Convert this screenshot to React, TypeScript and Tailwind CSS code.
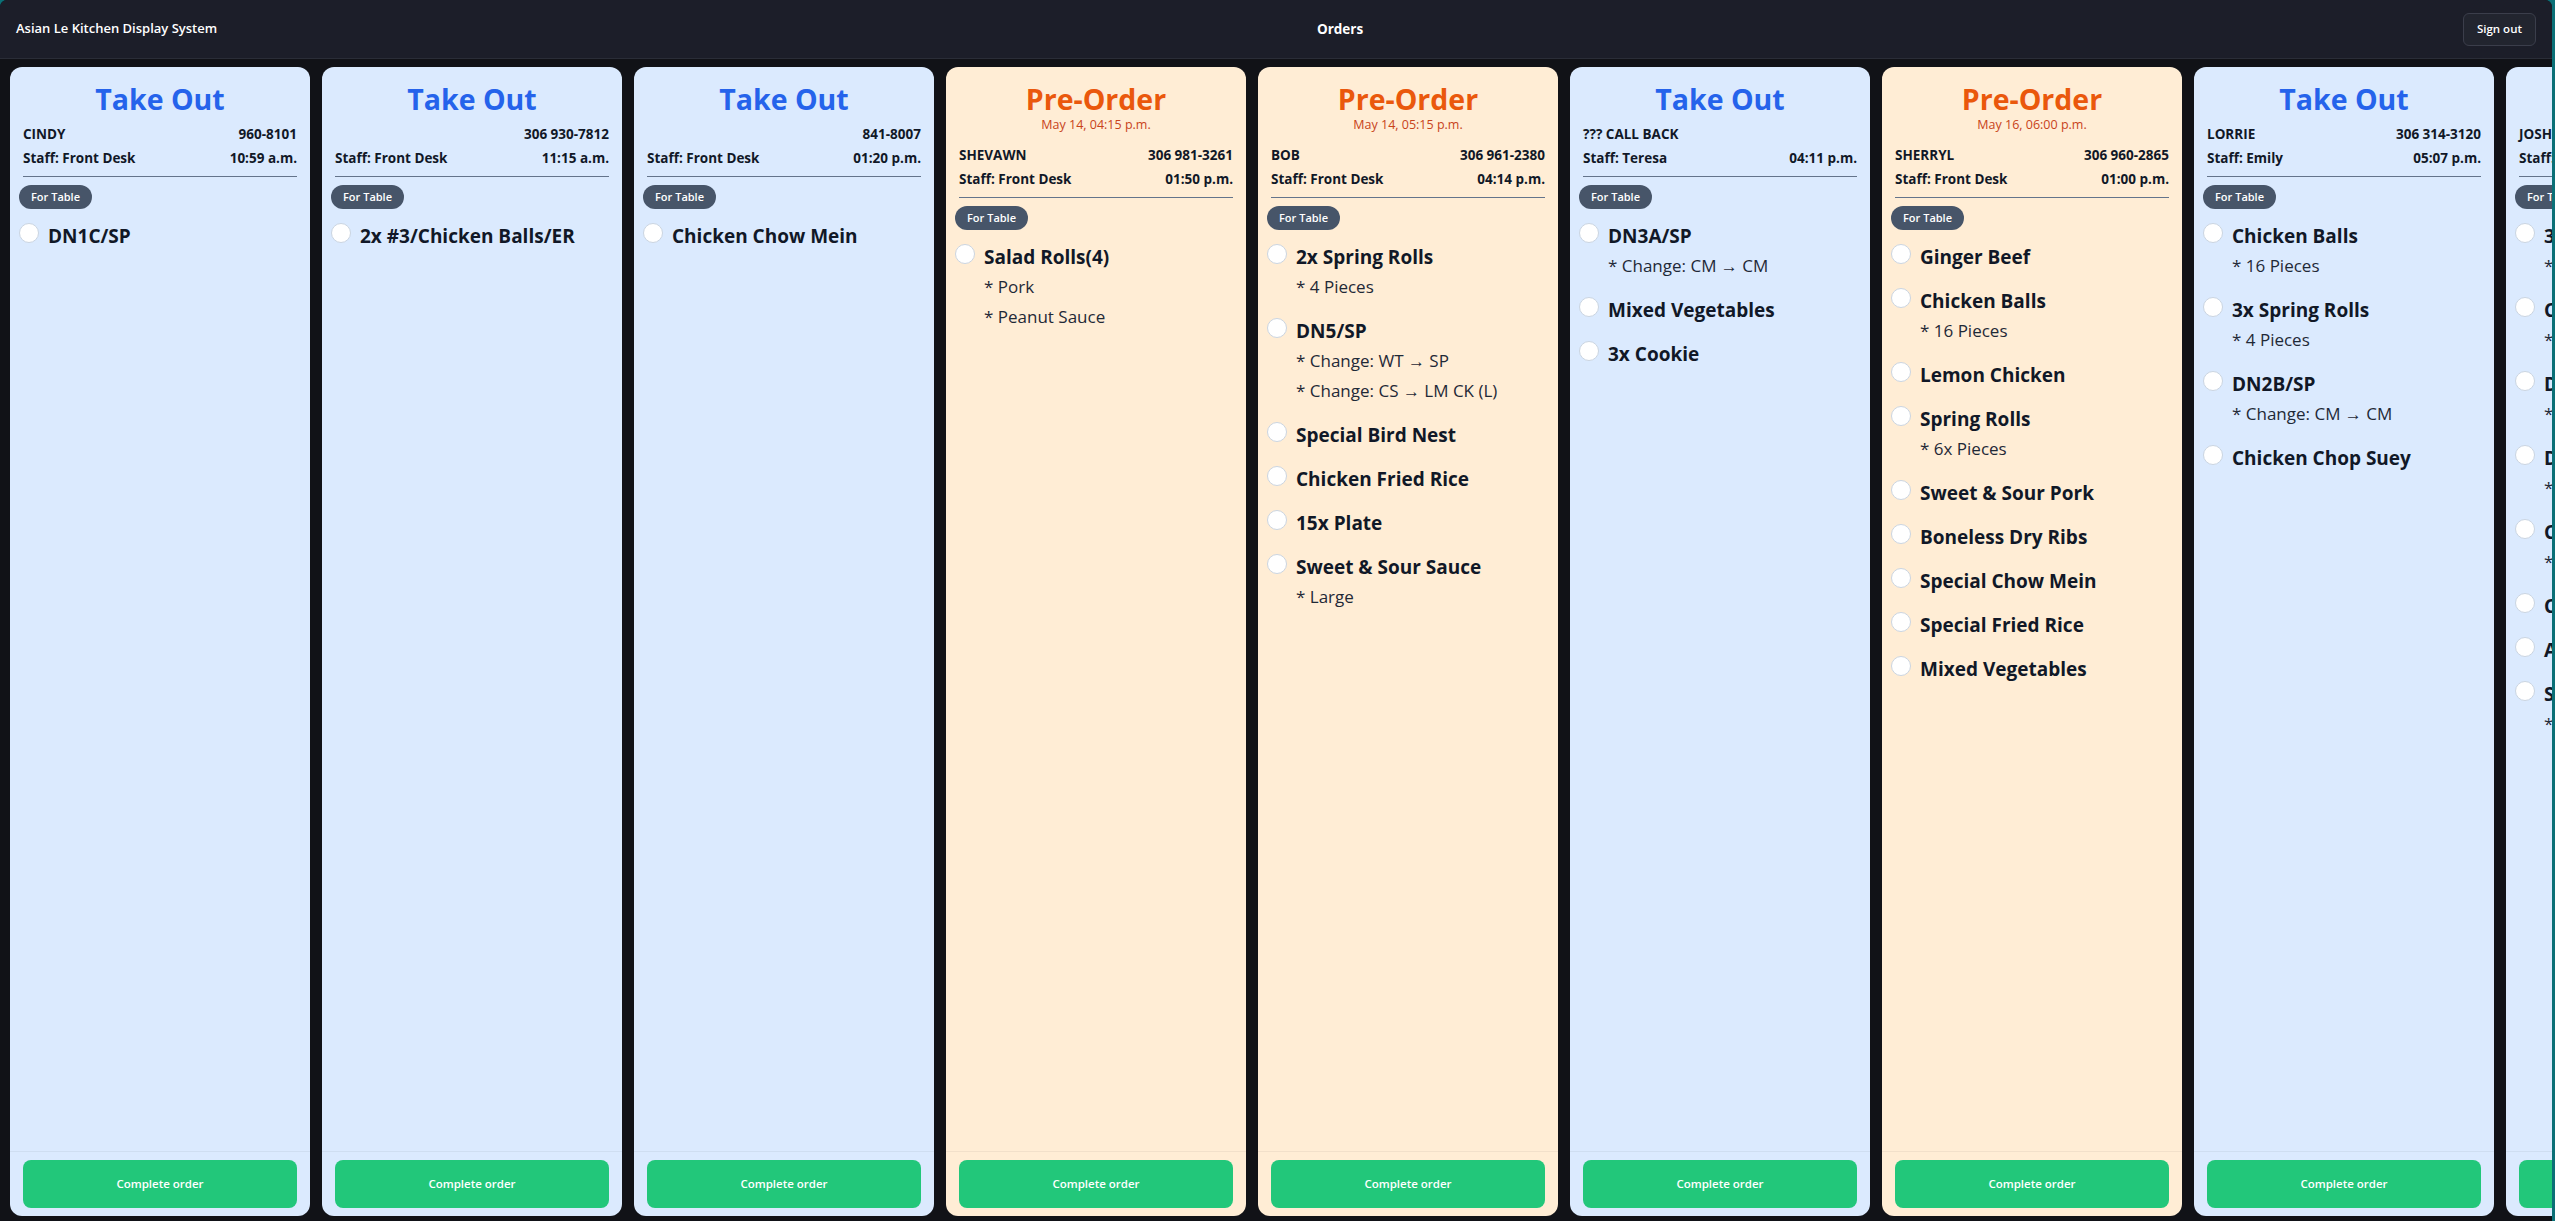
import clsx from "clsx";

type OrderItem = { name: string; notes?: string[] };

type Order = {
  id: number;
  kind: "takeout" | "preorder";
  due?: string;
  name?: string;
  phone?: string;
  staff: string;
  time: string;
  items: OrderItem[];
};

const orders: Order[] = [
  { id: 1, kind: "takeout", name: "CINDY", phone: "960-8101", staff: "Front Desk", time: "10:59 a.m.", items: [{ name: "DN1C/SP" }] },
  { id: 2, kind: "takeout", phone: "306 930-7812", staff: "Front Desk", time: "11:15 a.m.", items: [{ name: "2x #3/Chicken Balls/ER" }] },
  { id: 3, kind: "takeout", phone: "841-8007", staff: "Front Desk", time: "01:20 p.m.", items: [{ name: "Chicken Chow Mein" }] },
  {
    id: 4,
    kind: "preorder",
    due: "May 14, 04:15 p.m.",
    name: "SHEVAWN",
    phone: "306 981-3261",
    staff: "Front Desk",
    time: "01:50 p.m.",
    items: [{ name: "Salad Rolls(4)", notes: ["Pork", "Peanut Sauce"] }],
  },
  {
    id: 5,
    kind: "preorder",
    due: "May 14, 05:15 p.m.",
    name: "BOB",
    phone: "306 961-2380",
    staff: "Front Desk",
    time: "04:14 p.m.",
    items: [
      { name: "2x Spring Rolls", notes: ["4 Pieces"] },
      { name: "DN5/SP", notes: ["Change: WT → SP", "Change: CS → LM CK (L)"] },
      { name: "Special Bird Nest" },
      { name: "Chicken Fried Rice" },
      { name: "15x Plate" },
      { name: "Sweet & Sour Sauce", notes: ["Large"] },
    ],
  },
  {
    id: 6,
    kind: "takeout",
    name: "??? CALL BACK",
    staff: "Teresa",
    time: "04:11 p.m.",
    items: [{ name: "DN3A/SP", notes: ["Change: CM → CM"] }, { name: "Mixed Vegetables" }, { name: "3x Cookie" }],
  },
  {
    id: 7,
    kind: "preorder",
    due: "May 16, 06:00 p.m.",
    name: "SHERRYL",
    phone: "306 960-2865",
    staff: "Front Desk",
    time: "01:00 p.m.",
    items: [
      { name: "Ginger Beef" },
      { name: "Chicken Balls", notes: ["16 Pieces"] },
      { name: "Lemon Chicken" },
      { name: "Spring Rolls", notes: ["6x Pieces"] },
      { name: "Sweet & Sour Pork" },
      { name: "Boneless Dry Ribs" },
      { name: "Special Chow Mein" },
      { name: "Special Fried Rice" },
      { name: "Mixed Vegetables" },
    ],
  },
  {
    id: 8,
    kind: "takeout",
    name: "LORRIE",
    phone: "306 314-3120",
    staff: "Emily",
    time: "05:07 p.m.",
    items: [
      { name: "Chicken Balls", notes: ["16 Pieces"] },
      { name: "3x Spring Rolls", notes: ["4 Pieces"] },
      { name: "DN2B/SP", notes: ["Change: CM → CM"] },
      { name: "Chicken Chop Suey" },
    ],
  },
  {
    id: 9,
    kind: "takeout",
    name: "JOSH",
    phone: "306 715-4402",
    staff: "Front Desk",
    time: "05:12 p.m.",
    items: [
      { name: "3x Spring Rolls", notes: ["4 Pieces"] },
      { name: "Chicken Balls", notes: ["16 Pieces"] },
      { name: "DN1A/SP", notes: ["Change: CM → SP"] },
      { name: "DN4/SP", notes: ["Change: WT → CM"] },
      { name: "Chicken Fried Rice", notes: ["Large"] },
      { name: "Chicken Chow Mein" },
      { name: "Almond Guy Ding" },
      { name: "Sweet & Sour Pork", notes: ["Large"] },
    ],
  },
];

export default function App() {
  return (
    <div className="flex h-screen w-full bg-[#0b7077] font-['Open_Sans',sans-serif]">
      <div className="flex h-full w-[2552px] shrink-0 flex-col overflow-hidden rounded-t-[7px] bg-[#111217]">
        <header className="flex h-[59px] shrink-0 items-center justify-between border-b border-[#2a2d37] bg-[#1c1e29] px-4">
          <h1 className="text-[13px] font-semibold text-white">Asian Le Kitchen Display System</h1>
          <span className="text-[13.5px] font-bold text-white">Orders</span>
          <button
            className="h-[33px] rounded-md border border-[#3b3e4b] bg-[#22252f] px-[13px] text-[11.5px] font-semibold text-white"
            type="button"
          >
            Sign out
          </button>
        </header>

        <main className="flex min-h-0 flex-1 gap-3 overflow-hidden pb-[5px] pl-[10px] pt-2">
          {orders.map((order) => (
            <OrderCard key={order.id} order={order} />
          ))}
        </main>
      </div>
    </div>
  );
}

function OrderCard({ order }: { order: Order }) {
  const pre = order.kind === "preorder";

  return (
    <section className={clsx("flex h-full w-[300px] shrink-0 flex-col rounded-xl", pre ? "bg-[#ffedd5]" : "bg-[#dbeafe]")}>
      <header className="px-[13px] pt-[14px] text-[#111827]">
        <h2 className={clsx("text-center text-[28.5px] font-bold leading-9", pre ? "text-[#ea580c]" : "text-[#2563eb]")}>
          {pre ? "Pre-Order" : "Take Out"}
        </h2>
        {order.due && <p className="h-4 text-center text-[12.5px] leading-4 text-[#c8431a]">{order.due}</p>}
        <div className={clsx("flex h-6 items-center justify-between text-[13.5px] font-bold", order.due ? "mt-[10px]" : "mt-[5px]")}>
          <span>{order.name}</span>
          <span>{order.phone}</span>
        </div>
        <div className="flex h-6 items-center justify-between text-[13.5px] font-bold">
          <span>Staff: {order.staff}</span>
          <span>{order.time}</span>
        </div>
        <div className="mt-[6px] h-px bg-[#64748b]" />
      </header>

      <div className="flex min-h-0 flex-1 flex-col overflow-hidden px-[9px] pt-2">
        <span className="self-start rounded-full bg-[#475569] px-3 text-[11px] font-semibold leading-6 text-white">For Table</span>
        <ul className="mt-[13px] flex flex-col gap-4">
          {order.items.map((item, index) => (
            <li key={`${item.name}-${index}`} className="flex gap-[9px]">
              <span className="mt-[1px] size-5 shrink-0 rounded-full border border-[#cbd5e1] bg-white" />
              <div className="min-w-0">
                <div className="whitespace-nowrap text-[19px] font-bold leading-7 text-[#111827]">{item.name}</div>
                {item.notes && (
                  <div className="mt-0.5 flex flex-col gap-0.5">
                    {item.notes.map((note) => (
                      <div key={note} className="whitespace-nowrap text-[17px] leading-7 text-[#1f2937]">
                        * {note}
                      </div>
                    ))}
                  </div>
                )}
              </div>
            </li>
          ))}
        </ul>
      </div>

      <footer className="border-t border-black/5 px-[13px] py-2">
        <button className="h-12 w-full rounded-lg bg-[#22c77a] text-[11.5px] font-semibold text-white" type="button">
          Complete order
        </button>
      </footer>
    </section>
  );
}
